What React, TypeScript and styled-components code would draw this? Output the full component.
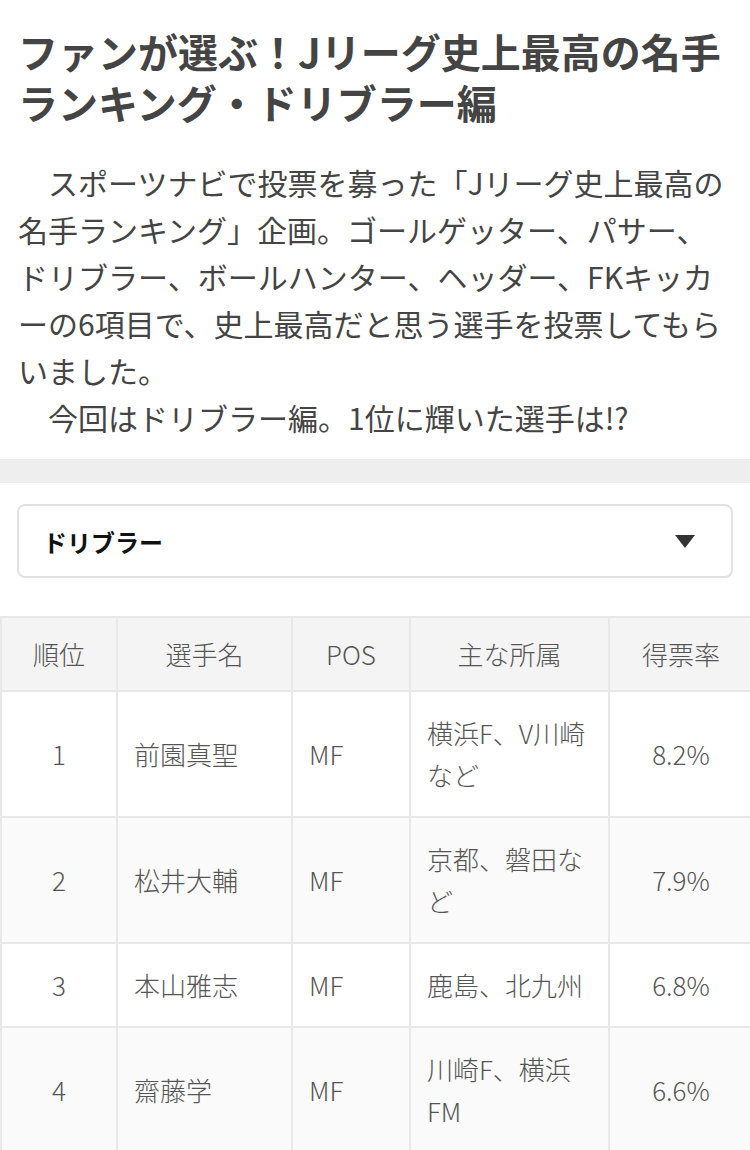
import React from "react";
import styled, { createGlobalStyle } from "styled-components";

const Global = createGlobalStyle`
  html, body { margin: 0; padding: 0; background: #fff; }
  body { font-family: "Noto Sans CJK JP", "Noto Sans", sans-serif; }
`;

const Page = styled.div`
  width: 750px;
  background: #fff;
  overflow: hidden;
`;

const Header = styled.header`
  padding: 26px 18px 0 18px;
`;

const Title = styled.h1`
  margin: 0;
  font-size: 40px;
  line-height: 51px;
  font-weight: 700;
  color: #444;
  white-space: nowrap;
`;

const TitleLine = styled.span`
  display: block;
  height: 51px;
`;

const Lead = styled.div`
  margin: 31px 0 0 0;
  font-size: 30px;
  line-height: 47px;
  font-weight: 400;
  color: #444;
  white-space: pre;
`;

const LeadLine = styled.div<{ $indent?: boolean }>`
  padding-left: ${(p) => (p.$indent ? "1em" : "0")};
`;

const Band = styled.div`
  margin-top: 18px;
  height: 24px;
  background: #eeeeee;
`;

const SelectWrap = styled.div`
  padding: 21px 17px 38px 17px;
`;

const SelectBox = styled.div`
  height: 70px;
  border: 2px solid #e2e2e2;
  border-radius: 8px;
  display: flex;
  align-items: center;
  justify-content: space-between;
  padding: 0 36px 0 24px;
`;

const SelectLabel = styled.span`
  font-size: 24px;
  font-weight: 700;
  color: #111;
`;

const Caret = styled.span`
  width: 0;
  height: 0;
  border-left: 10px solid transparent;
  border-right: 10px solid transparent;
  border-top: 13px solid #333;
`;

const Table = styled.table`
  width: 752px;
  border-collapse: collapse;
  table-layout: fixed;
  color: #555;
  font-size: 26px;
  line-height: 42px;
  font-weight: 300;
`;

const HeadCell = styled.th`
  background: #f4f4f4;
  border: 2px solid #e8e8e8;
  font-weight: 300;
  padding: 15px 6px;
  text-align: center;
`;

const Row = styled.tr<{ $alt: boolean }>`
  background: ${(p) => (p.$alt ? "#fafafa" : "#fff")};
`;

const Cell = styled.td<{ $align?: "left" | "center" }>`
  border: 2px solid #e8e8e8;
  padding: 20px 16px;
  text-align: ${(p) => p.$align ?? "left"};
  vertical-align: middle;
`;

const rows = [
  { rank: "1", name: "前園真聖", pos: "MF", club: "横浜F、V川崎など", rate: "8.2%" },
  { rank: "2", name: "松井大輔", pos: "MF", club: "京都、磐田など", rate: "7.9%" },
  { rank: "3", name: "本山雅志", pos: "MF", club: "鹿島、北九州", rate: "6.8%" },
  { rank: "4", name: "齋藤学", pos: "MF", club: "川崎F、横浜FM", rate: "6.6%" },
];

const leadLines: { text: string; indent?: boolean }[] = [
  { text: "スポーツナビで投票を募った「Jリーグ史上最高の", indent: true },
  { text: "名手ランキング」企画。ゴールゲッター、パサー、" },
  { text: "ドリブラー、ボールハンター、ヘッダー、FKキッカ" },
  { text: "ーの6項目で、史上最高だと思う選手を投票してもら" },
  { text: "いました。" },
  { text: "今回はドリブラー編。1位に輝いた選手は!?", indent: true },
];

export default function App() {
  return (
    <Page>
      <Global />
      <Header>
        <Title>
          <TitleLine>ファンが選ぶ！Jリーグ史上最高の名手</TitleLine>
          <TitleLine>ランキング・ドリブラー編</TitleLine>
        </Title>
        <Lead>
          {leadLines.map((l, i) => (
            <LeadLine key={i} $indent={l.indent}>
              {l.text}
            </LeadLine>
          ))}
        </Lead>
      </Header>
      <Band />
      <SelectWrap>
        <SelectBox>
          <SelectLabel>ドリブラー</SelectLabel>
          <Caret />
        </SelectBox>
      </SelectWrap>
      <Table>
        <colgroup>
          <col style={{ width: 116 }} />
          <col style={{ width: 175 }} />
          <col style={{ width: 118 }} />
          <col style={{ width: 199 }} />
          <col style={{ width: 144 }} />
        </colgroup>
        <thead>
          <tr>
            <HeadCell>順位</HeadCell>
            <HeadCell>選手名</HeadCell>
            <HeadCell>POS</HeadCell>
            <HeadCell>主な所属</HeadCell>
            <HeadCell>得票率</HeadCell>
          </tr>
        </thead>
        <tbody>
          {rows.map((r, i) => (
            <Row key={r.rank} $alt={i % 2 === 1}>
              <Cell $align="center">{r.rank}</Cell>
              <Cell>{r.name}</Cell>
              <Cell>{r.pos}</Cell>
              <Cell>{r.club}</Cell>
              <Cell $align="center">{r.rate}</Cell>
            </Row>
          ))}
        </tbody>
      </Table>
    </Page>
  );
}
